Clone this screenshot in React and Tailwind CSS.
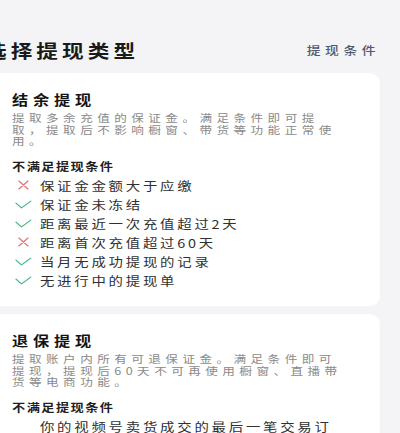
import React from "react";

const Cross = () => (
  <svg width="10" height="10" viewBox="0 0 10 10" className="ml-[2px]">
    <path d="M1.2 1 L8.8 9 M8.8 1 L1.2 9" stroke="#e47a7a" strokeWidth="1.1" fill="none" strokeLinecap="round" />
  </svg>
);

const Check = () => (
  <svg width="14" height="9" viewBox="0 0 14 9">
    <path d="M0.8 3.2 L5.4 7.8 L13.2 1.2" stroke="#4db68a" strokeWidth="1.1" fill="none" strokeLinecap="round" strokeLinejoin="round" />
  </svg>
);

const Row = ({ ok, children, multi }) => (
  <li className={"flex pl-[2.5px] " + (multi ? "items-end" : "items-center")}>
    <span className={"w-[20.8px] shrink-0 flex items-center " + (multi ? "h-[19px]" : "")}>{ok ? <Check /> : <Cross />}</span>
    <span className="text-[12px] tracking-[2.3px] leading-[19px] text-[#303030]">{children}</span>
  </li>
);

const Card = ({ title, desc, children, className }) => (
  <div className={"rounded-[9px] bg-white pl-[22.5px] pr-[28px] pt-[16px] pb-[16.5px] " + className}>
    <div className="text-[13.5px] font-bold tracking-[4px] leading-[20px] text-[#141414]">{title}</div>
    <div className="mt-[3px] text-[10.5px] tracking-[3.7px] leading-[11.5px] text-[#8a8a8a]">{desc}</div>
    <div className="mt-[10px] text-[11px] font-semibold tracking-[1.2px] leading-[18px] text-[#1f1f1f]">不满足提现条件</div>
    <ul className="mt-[1px]">{children}</ul>
  </div>
);

export default function App() {
  return (
    <div
      className="w-[400px] h-[433px] overflow-hidden bg-[#f4f4f6]"
      style={{ fontFamily: '"Noto Sans CJK SC", "Noto Sans", sans-serif' }}
    >
      <div className="ml-[-15px] w-[329.2px] pt-[39px] origin-top-left scale-x-[1.2]">
        <div className="flex items-center justify-between h-[22px]">
          <div className="text-[18px] font-bold tracking-[3.4px] leading-[22px] text-[#1a1a1a]">选择提现类型</div>
          <div className="text-[11.5px] font-medium tracking-[3.75px] leading-[22px] text-[#4f5a70]">提现条件</div>
        </div>
        <Card
          className="mt-[12px]"
          title="结余提现"
          desc="提取多余充值的保证金。满足条件即可提取，提取后不影响橱窗、带货等功能正常使用。"
        >
          <Row ok={false}>保证金金额大于应缴</Row>
          <Row ok>保证金未冻结</Row>
          <Row ok>距离最近一次充值超过2天</Row>
          <Row ok={false}>距离首次充值超过60天</Row>
          <Row ok>当月无成功提现的记录</Row>
          <Row ok>无进行中的提现单</Row>
        </Card>
        <Card
          className="mt-[8px]"
          title="退保提现"
          desc="提取账户内所有可退保证金。满足条件即可提现，提现后60天不可再使用橱窗、直播带货等电商功能。"
        >
          <Row ok={false} multi>你的视频号卖货成交的最后一笔交易订单已超过60天，且无售后中的订单</Row>
        </Card>
      </div>
    </div>
  );
}
